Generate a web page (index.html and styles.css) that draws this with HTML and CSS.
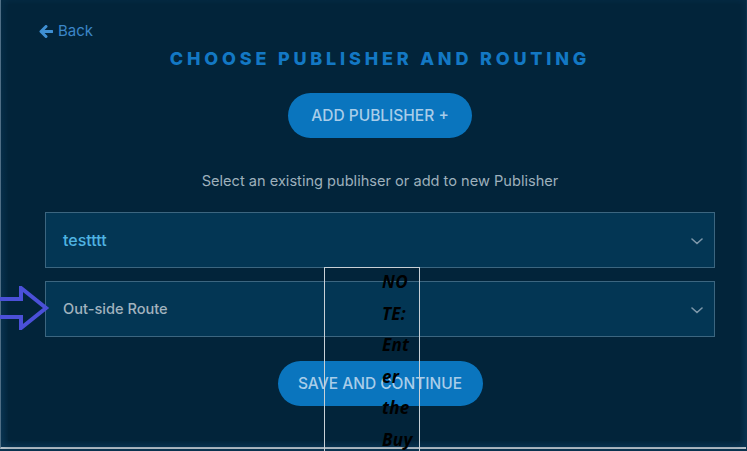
FILE: index.html
```html
<!DOCTYPE html>
<html>
<head>
<meta charset="utf-8">
<link rel="stylesheet" href="styles.css">
</head>
<body>
<div class="frame">
  <div class="panel">
    <a class="back">
      <svg class="back-icon" width="14" height="13" viewBox="0 0 14 13"><path d="M7 1.5 L2 6.5 L7 11.5 M2.5 6.5 H13" fill="none" stroke="#3f8fd2" stroke-width="3" stroke-linecap="round" stroke-linejoin="round"/></svg>
      <span>Back</span>
    </a>
    <h1 class="title">CHOOSE PUBLISHER AND ROUTING</h1>
    <button class="pill add">ADD PUBLISHER +</button>
    <p class="hint">Select an existing publihser or add to new Publisher</p>
    <div class="fields">
      <div class="select">
        <span class="value accent">testttt</span>
        <svg class="chev" width="12" height="7" viewBox="0 0 12 7"><path d="M1 1 L6 5.5 L11 1" fill="none" stroke="#7d97aa" stroke-width="1.6" stroke-linecap="round"/></svg>
      </div>
      <div class="select">
        <span class="value">Out-side Route</span>
        <svg class="chev" width="12" height="7" viewBox="0 0 12 7"><path d="M1 1 L6 5.5 L11 1" fill="none" stroke="#7d97aa" stroke-width="1.6" stroke-linecap="round"/></svg>
      </div>
    </div>
    <button class="pill save">SAVE AND CONTINUE</button>
  </div>
  <svg class="pointer" width="50" height="44" viewBox="0 0 50 44"><path d="M-2 13 H21 V2 L46 22 L21 42 V31 H-2 Z" fill="none" stroke="#4b50d8" stroke-width="4" stroke-linejoin="miter"/></svg>
  <div class="note">
    <div class="note-text">NO<br>TE:<br>Ent<br>er<br>the<br>Buy</div>
  </div>
</div>
</body>
</html>
```
FILE: styles.css
```css
html, body {
  margin: 0;
  padding: 0;
}
body {
  width: 747px;
  height: 451px;
  overflow: hidden;
  background: #0b3450;
  font-family: Inter, "Noto Sans", sans-serif;
}
.frame {
  position: relative;
  width: 746px;
  height: 449px;
  border-left: 1px solid #55758b;
  border-bottom: 2px solid #b9c3cb;
  background: linear-gradient(#062c45, #0a3553);
  padding: 4px 6px 6px 7px;
  box-sizing: border-box;
}
.panel {
  height: 100%;
  box-sizing: border-box;
  padding-left: 12px;
  background: #02243a;
  box-shadow: 0 0 6px 3px #02243a;
  display: flex;
  flex-direction: column;
  align-items: center;
  position: relative;
}
.back {
  align-self: flex-start;
  display: flex;
  align-items: center;
  gap: 5px;
  margin: 18px 0 0 19px;
  color: #3b86c8;
  font-size: 15px;
  line-height: 18px;
}
.back-icon {
  display: block;
}
.title {
  margin: 8px 0 0;
  color: #1378c4;
  font-size: 18px;
  font-weight: 800;
  letter-spacing: 3.8px;
  line-height: 22px;
}
.pill {
  border: none;
  border-radius: 23px;
  background: #0a75be;
  color: #a9cde9;
  font-family: Inter, "Noto Sans", sans-serif;
  font-size: 15.5px;
  font-weight: 500;
  height: 45px;
  padding: 0;
}
.add {
  margin-top: 23px;
  width: 184px;
}
.hint {
  margin: 33px 0 0;
  color: #9eb0bc;
  font-size: 14.6px;
  line-height: 20px;
}
.fields {
  align-self: stretch;
  margin: 21px 25px 0 25px;
  display: flex;
  flex-direction: column;
  gap: 13px;
}
.select {
  height: 56px;
  box-sizing: border-box;
  border: 1px solid #3c6680;
  background: #033654;
  display: flex;
  align-items: center;
  justify-content: space-between;
  padding: 0 11px 0 17px;
}
.value {
  color: #a2b3bf;
  font-size: 14.6px;
  font-weight: 500;
}
.value.accent {
  color: #4fb4e2;
  font-size: 16px;
}
.chev {
  display: block;
  margin-top: 2px;
}
.save {
  margin-top: 24px;
  width: 205px;
}
.pointer {
  position: absolute;
  left: -1px;
  top: 286px;
}
.note {
  position: absolute;
  left: 323px;
  top: 267px;
  width: 96px;
  height: 190px;
  border: 1px solid #c8d0d6;
  box-sizing: border-box;
  padding-left: 57px;
}
.note-text {
  font-family: "Open Sans", "Noto Sans", sans-serif;
  font-style: italic;
  font-weight: 700;
  font-size: 17px;
  line-height: 31.5px;
  color: #000;
  margin-top: -2px;
  letter-spacing: 0.3px;
}
```
